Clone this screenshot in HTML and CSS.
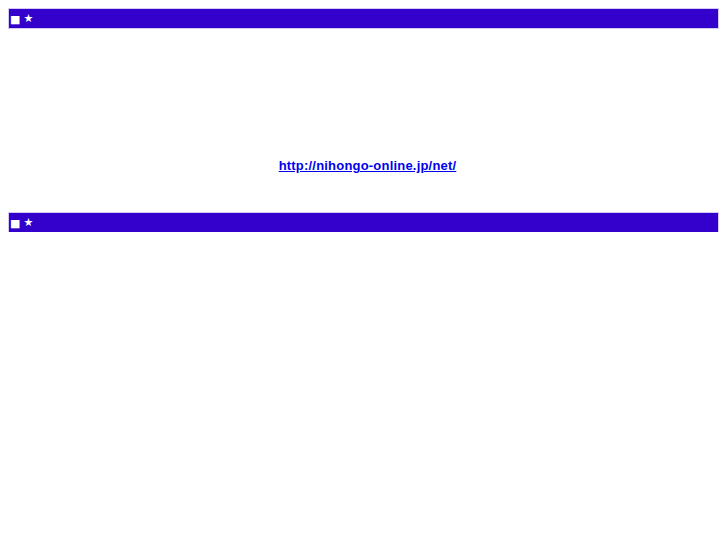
FILE: index.html
```html
<!DOCTYPE html>
<html>
<head>
<meta charset="utf-8">
<link rel="stylesheet" href="styles.css">
</head>
<body>
<div class="bar"><span class="sq">■</span><span class="star">★</span></div>
<div class="middle"><a class="link" href="#">http://nihongo-online.jp/net/</a></div>
<div class="bar"><span class="sq">■</span><span class="star">★</span></div>
</body>
</html>
```
FILE: styles.css
```css
html, body { background: #ffffff; }
body {
  margin: 8px;
  font-family: "DejaVu Sans", sans-serif;
}
.bar {
  margin: 1px 1px 0 1px;
  height: 19px;
  background: #3300cc;
  box-shadow: 0 0 0 1px #d4caf5;
  color: #ffffff;
  padding-left: 1px;
  display: flex;
  align-items: center;
  gap: 3px;
}
.sq {
  font-family: "DejaVu Sans", sans-serif;
  font-size: 11px;
  line-height: 1;
  position: relative;
  top: 1px;
}
.star {
  font-family: "DejaVu Sans", sans-serif;
  font-size: 11px;
  line-height: 1;
}
.middle {
  height: 184px;
  box-sizing: border-box;
  padding-top: 129px;
  padding-left: 8px;
  text-align: center;
  line-height: 15px;
}
.link {
  font-family: "Liberation Sans", Arial, sans-serif;
  font-weight: bold;
  font-size: 13px;
  letter-spacing: 0.2px;
  color: #0000ee;
  text-decoration: underline;
}
```
